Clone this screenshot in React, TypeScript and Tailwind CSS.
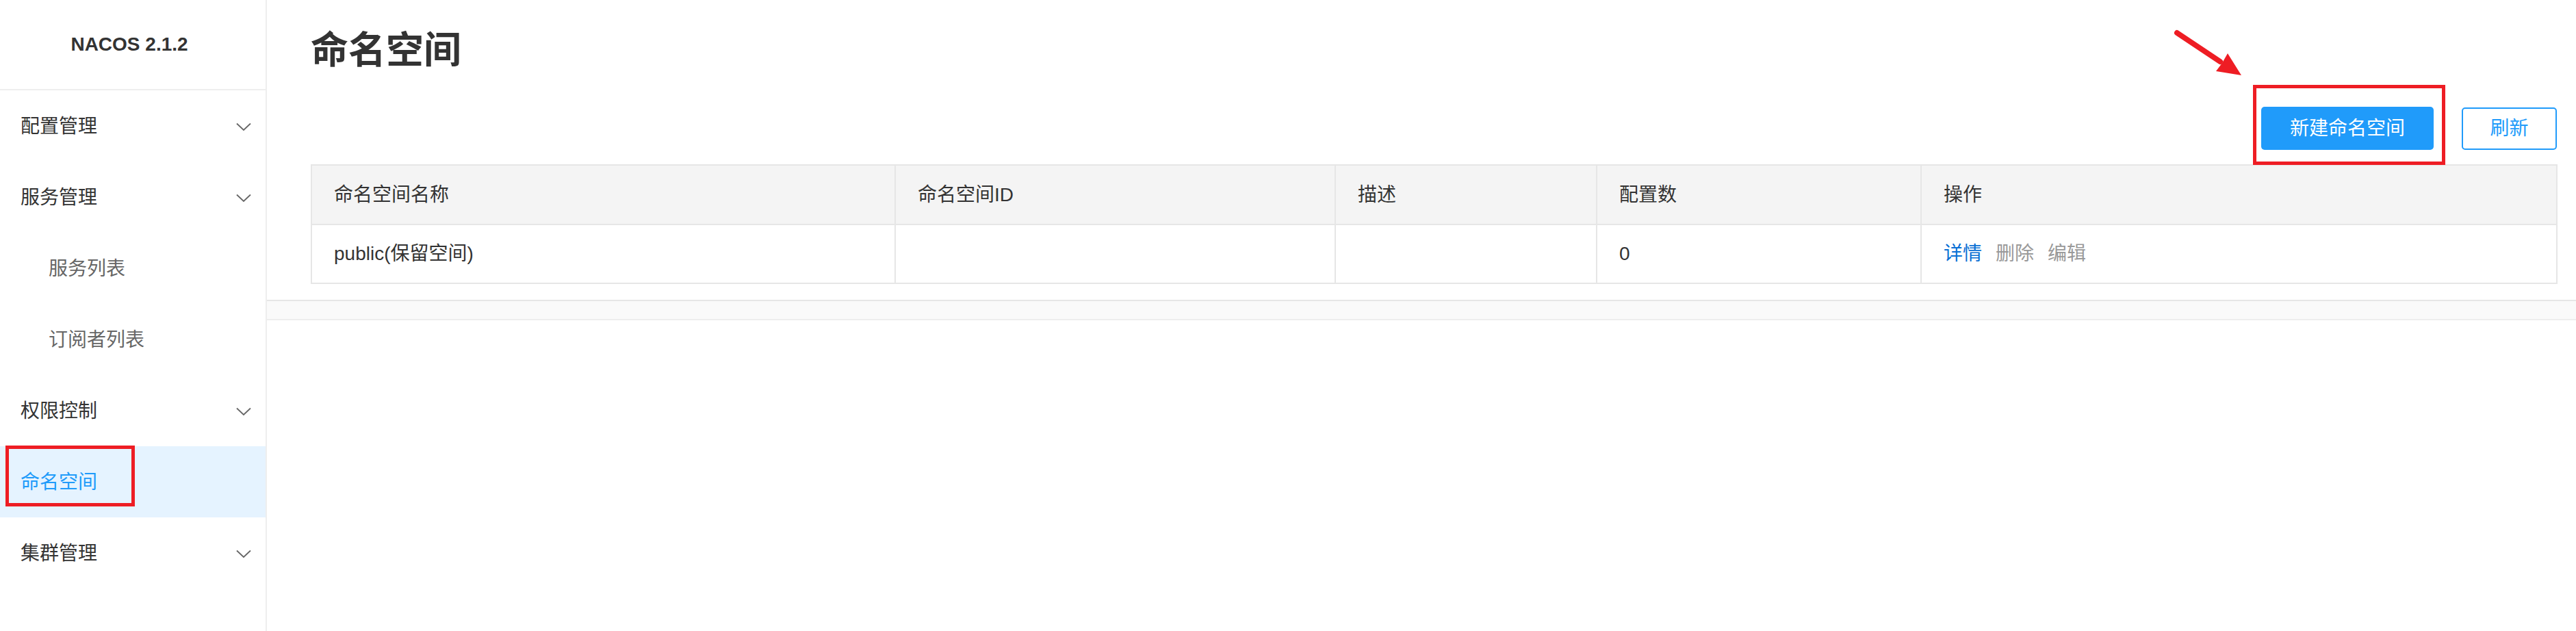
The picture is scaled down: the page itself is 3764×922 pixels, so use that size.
import { ReactNode } from 'react'

const font = {
  fontFamily: '"Liberation Sans", "Noto Sans CJK SC", Arial, sans-serif',
}

const Chevron = () => (
  <svg width="22" height="13" viewBox="0 0 22 13" className="flex-none">
    <polyline
      points="1,1.5 11,11 21,1.5"
      fill="none"
      stroke="#666"
      strokeWidth="1.8"
    />
  </svg>
)

const MenuItem = ({
  label,
  sub,
  arrow,
  active,
}: {
  label: string
  sub?: boolean
  arrow?: boolean
  active?: boolean
}) => {
  let tone = 'pl-[30px] text-[#333]'
  if (sub) tone = 'pl-[71px] text-[#666]'
  if (active) tone = 'pl-[30px] bg-[#e5f3ff] text-[#209bfa]'
  return (
    <div
      className={`h-[104px] flex items-center justify-between pr-[21px] pt-[2px] text-[28px] ${tone}`}
    >
      <span>{label}</span>
      {arrow && <Chevron />}
    </div>
  )
}

const Cell = ({
  children,
  className = '',
}: {
  children?: ReactNode
  className?: string
}) => (
  <div className={`flex items-center pl-[32px] text-[28px] text-[#333] ${className}`}>
    {children}
  </div>
)

const cols = 'grid grid-cols-[853px_643px_382px_474px_1fr]'

export default function App() {
  return (
    <div
      className="relative w-[3764px] h-[922px] flex bg-white overflow-hidden"
      style={font}
    >
      {/* sidebar */}
      <aside className="w-[390px] flex-none border-r-2 border-[#eeeeee] flex flex-col">
        <div className="h-[132px] border-b-2 border-[#eeeeee] flex items-center justify-center pr-[10px]">
          <span className="text-[28px] font-bold text-[#333]">NACOS 2.1.2</span>
        </div>
        <MenuItem label="配置管理" arrow />
        <MenuItem label="服务管理" arrow />
        <MenuItem label="服务列表" sub />
        <MenuItem label="订阅者列表" sub />
        <MenuItem label="权限控制" arrow />
        <MenuItem label="命名空间" active />
        <MenuItem label="集群管理" arrow />
      </aside>

      {/* main */}
      <main className="flex-1 flex flex-col">
        <div className="h-[146px] flex items-center pl-[64px]">
          <h1 className="text-[55px] leading-none font-semibold text-[#333]">命名空间</h1>
        </div>

        <div className="mt-[10px] flex justify-end items-center gap-[41px] pr-[28px]">
          <button className="w-[252px] h-[63px] rounded-[5px] bg-[#209bfa] text-white text-[28px]">
            新建命名空间
          </button>
          <button className="w-[139px] h-[62px] rounded-[5px] border-2 border-[#209bfa] bg-white text-[#209bfa] text-[28px]">
            刷新
          </button>
        </div>

        <div className="mt-[21px] ml-[64px] mr-[27px] border-2 border-[#e6e6e6]">
          <div className={`${cols} h-[87px] bg-[#f4f4f4] border-b-2 border-[#e6e6e6]`}>
            <Cell className="border-r-2 border-[#e6e6e6]">命名空间名称</Cell>
            <Cell className="border-r-2 border-[#e6e6e6]">命名空间ID</Cell>
            <Cell className="border-r-2 border-[#e6e6e6]">描述</Cell>
            <Cell className="border-r-2 border-[#e6e6e6]">配置数</Cell>
            <Cell>操作</Cell>
          </div>
          <div className={`${cols} h-[84px]`}>
            <Cell className="border-r-2 border-[#e6e6e6]">public(保留空间)</Cell>
            <Cell className="border-r-2 border-[#e6e6e6]" />
            <Cell className="border-r-2 border-[#e6e6e6]" />
            <Cell className="border-r-2 border-[#e6e6e6]">0</Cell>
            <Cell className="gap-[20px]">
              <span className="text-[#0a6fd4]">详情</span>
              <span className="text-[#999]">删除</span>
              <span className="text-[#999]">编辑</span>
            </Cell>
          </div>
        </div>

        <div className="mt-[23px] h-[30px] bg-[#fafafa] border-t-2 border-b-2 border-t-[#e6e6e6] border-b-[#eeeeee]" />
      </main>

      {/* annotations */}
      <div className="absolute left-[8px] top-[651px] w-[189px] h-[89px] border-[5px] border-[#ee1d24]" />
      <div className="absolute left-[3292px] top-[124px] w-[281px] h-[117px] border-[5px] border-[#ee1d24]" />
      <svg
        className="absolute left-[3170px] top-[40px]"
        width="115"
        height="80"
        viewBox="0 0 115 80"
      >
        <line
          x1="11"
          y1="8"
          x2="74"
          y2="50"
          stroke="#ee1d24"
          strokeWidth="8"
          strokeLinecap="round"
        />
        <polygon points="105,70 68,64 77,52 85,38" fill="#ee1d24" />
      </svg>
    </div>
  )
}
